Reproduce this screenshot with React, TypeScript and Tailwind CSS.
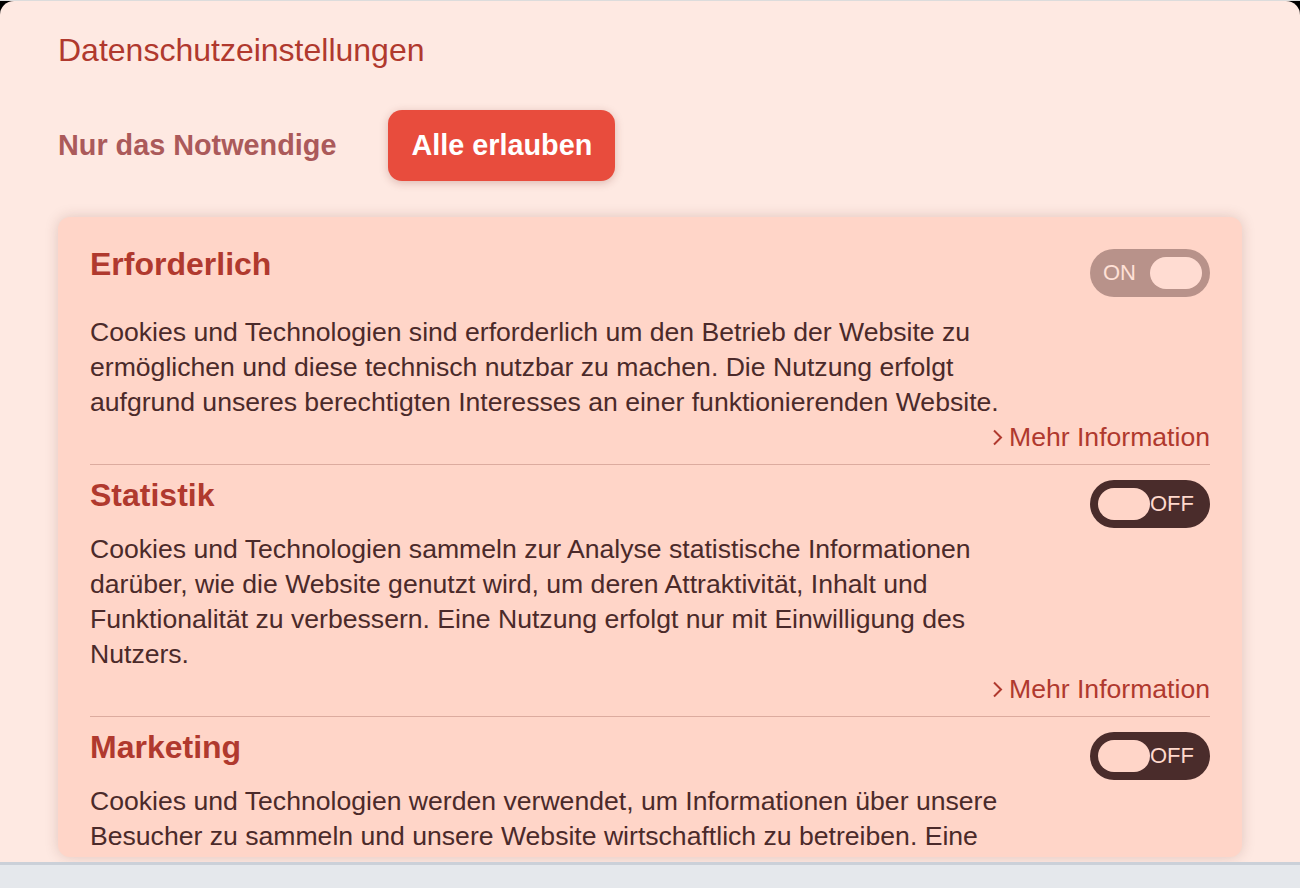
import React from "react";

type Section = {
  id: string;
  title: string;
  on: boolean;
  text: string;
  descTop: string;
};

const sections: Section[] = [
  {
    id: "req",
    title: "Erforderlich",
    on: true,
    descTop: "mt-[18px]",
    text: "Cookies und Technologien sind erforderlich um den Betrieb der Website zu ermöglichen und diese technisch nutzbar zu machen. Die Nutzung erfolgt aufgrund unseres berechtigten Interesses an einer funktionierenden Website.",
  },
  {
    id: "stats",
    title: "Statistik",
    on: false,
    descTop: "mt-[4px]",
    text: "Cookies und Technologien sammeln zur Analyse statistische Informationen darüber, wie die Website genutzt wird, um deren Attraktivität, Inhalt und Funktionalität zu verbessern. Eine Nutzung erfolgt nur mit Einwilligung des Nutzers.",
  },
  {
    id: "mkt",
    title: "Marketing",
    on: false,
    descTop: "mt-[4px]",
    text: "Cookies und Technologien werden verwendet, um Informationen über unsere Besucher zu sammeln und unsere Website wirtschaftlich zu betreiben. Eine Nutzung erfolgt nur mit Einwilligung des Nutzers.",
  },
];

function Toggle({ on }: { on: boolean }) {
  if (on) {
    return (
      <div className="mt-[4px] flex h-[48px] w-[120px] shrink-0 items-center justify-between rounded-full bg-[#b8928a] pl-[13px] pr-[8px]">
        <span className="text-[22px] leading-none text-[#ffe0d6]">ON</span>
        <span className="h-[32px] w-[52px] rounded-full bg-[#ffdcd2]" />
      </div>
    );
  }
  return (
    <div className="mt-[4px] flex h-[48px] w-[120px] shrink-0 items-center rounded-full bg-[#4a2c2b] pl-[8px]">
      <span className="h-[32px] w-[52px] rounded-full bg-[#ffd5c8]" />
      <span className="text-[22px] leading-none text-[#ffd9cc]">OFF</span>
    </div>
  );
}

export default function App() {
  return (
    <div className="flex h-[888px] w-[1300px] flex-col overflow-hidden bg-black font-['Liberation_Sans',Arial,sans-serif]">
      <div className="h-px shrink-0 bg-[#dcdcdc]" />
      <div className="flex h-[861px] shrink-0 flex-col rounded-t-[14px] bg-[#fee9e2] px-[58px] pt-[31px]">
        <h1 className="text-[32px] leading-[36px] text-[#b0392e]">Datenschutzeinstellungen</h1>

        <div className="mt-[42px] flex items-center gap-[52px]">
          <span className="text-[28.8px] font-bold text-[#ab5a5a]">Nur das Notwendige</span>
          <button className="h-[71px] rounded-[14px] bg-[#e84c3d] px-[23px] text-[28.8px] font-bold text-white shadow-[0_2px_8px_rgba(120,40,30,0.25)]">
            Alle erlauben
          </button>
        </div>

        <div className="mt-[36px] h-[640px] shrink-0 overflow-hidden rounded-[12px] bg-[#ffd5c8] px-[32px] pt-[28px] shadow-[0_0_14px_rgba(90,40,30,0.18)]">
          {sections.map((s, i) => (
            <div key={s.id}>
              {i > 0 && <div className="mt-[9px] mb-[11px] h-px bg-[#dcab9f]" />}
              <div className="flex items-start justify-between">
                <h2 className="text-[32px] font-bold leading-[38px] text-[#b0392e]">{s.title}</h2>
                <Toggle on={s.on} />
              </div>
              <p className={`${s.descTop} w-[925px] text-[26.6px] leading-[35px] text-[#4b2a2a]`}>{s.text}</p>
              <div className="flex items-center justify-end gap-[6px] text-[26.6px] leading-[35px] text-[#b0392e]">
                <svg width="11" height="17" viewBox="0 0 11 17" fill="none">
                  <path d="M2 1.5 L9 8.5 L2 15.5" stroke="#b0392e" strokeWidth="2" />
                </svg>
                <span>Mehr Information</span>
              </div>
            </div>
          ))}
        </div>
      </div>
      <div className="h-[3px] shrink-0 bg-[#cbd0d8]" />
      <div className="flex-1 bg-[#e5e8ec]" />
    </div>
  );
}
